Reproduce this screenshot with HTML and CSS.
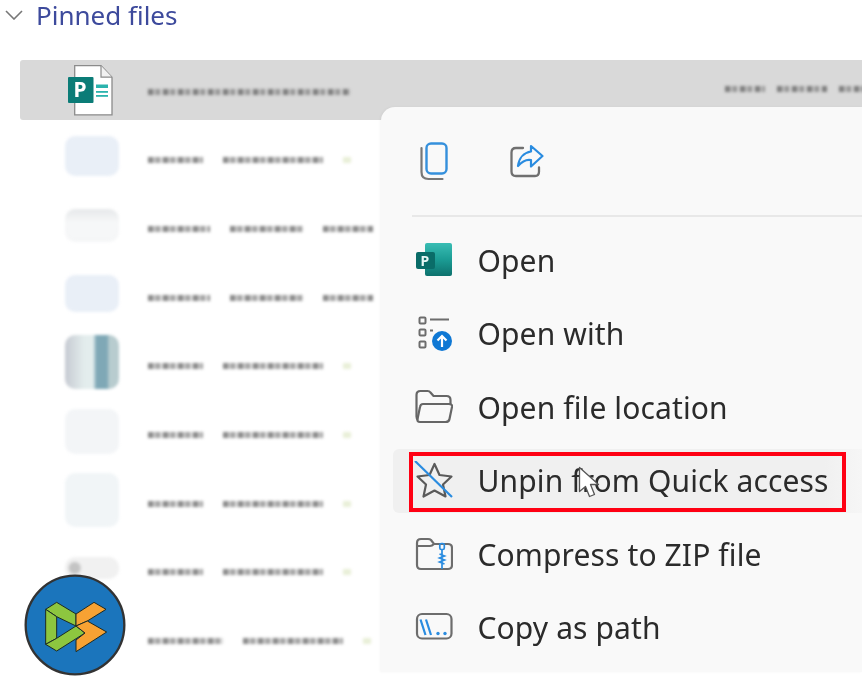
FILE: index.html
```html
<!DOCTYPE html>
<html lang="en">
<head>
<meta charset="utf-8">
<title>Pinned files</title>
<link rel="stylesheet" href="styles.css">
</head>
<body>
<main class="page">
  <header class="section-head">
    <svg class="chevron" viewBox="0 0 18 10" width="18" height="10"><path d="M1 1l8 8 8-8" fill="none" stroke="#777" stroke-width="1.6"/></svg>
    <h2 class="section-title">Pinned files</h2>
  </header>

  <section class="file-list">
    <div class="row row-selected">
      <svg class="doc-icon" viewBox="65 62 54 56" width="54" height="56">
        <path d="M74.7 65.7H101l11 11.5v37.6H74.7z" fill="#fff" stroke="#8b8b8b" stroke-width="1.3"/>
        <path d="M101 65.7v11.5h11" fill="#f1f1f1" stroke="#8b8b8b" stroke-width="1.2"/>
        <rect x="68" y="77" width="25.5" height="26" rx="1" fill="#0b7c77"/>
        <text x="73.5" y="97" class="doc-p">P</text>
        <rect x="96" y="84.500" width="12" height="3.500" fill="#2cb3ad"/>
        <rect x="96" y="91" width="12" height="1.800" fill="#2cb3ad"/>
        <rect x="96" y="95" width="12" height="1.800" fill="#2cb3ad"/>
      </svg>
      <div class="smears"><span class="seg w200"></span></div>
      <div class="smears far"><span class="seg w40"></span><span class="seg w50"></span><span class="seg w50"></span></div>
    </div>
    <div class="row"><div class="thumb t1"></div><div class="smears"><span class="seg w55"></span><span class="seg w100"></span><span class="seg tint"></span></div></div>
    <div class="row"><div class="thumb t2"></div><div class="smears"><span class="seg w62"></span><span class="seg w73"></span><span class="seg w50"></span></div></div>
    <div class="row"><div class="thumb t1 t3"></div><div class="smears"><span class="seg w62"></span><span class="seg w73"></span><span class="seg w50"></span></div></div>
    <div class="row"><div class="thumb t4"></div><div class="smears"><span class="seg w55"></span><span class="seg w100"></span><span class="seg tint"></span></div></div>
    <div class="row"><div class="thumb t5"></div><div class="smears"><span class="seg w55"></span><span class="seg w100"></span><span class="seg tint"></span></div></div>
    <div class="row"><div class="thumb t6"></div><div class="smears"><span class="seg w55"></span><span class="seg w100"></span><span class="seg tint"></span></div></div>
    <div class="row"><div class="thumb t7"></div><div class="smears"><span class="seg w55"></span><span class="seg w100"></span><span class="seg tint"></span></div></div>
    <div class="row"><div class="thumb t8"></div><div class="smears"><span class="seg w75"></span><span class="seg w100"></span><span class="seg tint"></span></div></div>
  </section>

  <nav class="menu">
    <div class="toolbar">
      <svg class="icon" viewBox="415 141 40 40" width="40" height="40">
        <path d="M421.500 148v24q0 7 7 7h14" fill="none" stroke="#777" stroke-width="2.200" stroke-linecap="round"/>
        <rect x="426.500" y="143.500" width="20" height="30" rx="4.500" fill="none" stroke="#3590dc" stroke-width="2.400"/>
      </svg>
      <svg class="icon" viewBox="505 141 40 40" width="40" height="40">
        <path d="M523 148h-7q-4.500 0-4.500 4.500v19q0 4.500 4.500 4.500h19q4 0 4-4.500v-4" fill="none" stroke="#707070" stroke-width="2.300" stroke-linecap="round"/>
        <path d="M518 166c1-8 6-13.500 13-14.500v-5.500l11.500 10-11.500 10.500v-6.500c-5-1-9.500 2-13 6z" fill="none" stroke="#2a8ce0" stroke-width="2.200" stroke-linejoin="round"/>
      </svg>
    </div>
    <div class="menu-sep"></div>
    <ul class="items">
      <li class="item">
        <svg class="icon" viewBox="0 0 40 40" width="40" height="40">
          <defs><linearGradient id="pj" x1="0" y1="0" x2="0" y2="1"><stop offset="0" stop-color="#39bdb4"/><stop offset=".5" stop-color="#1b9c94"/><stop offset="1" stop-color="#0d716d"/></linearGradient></defs>
          <rect x="12" y="2" width="27" height="33" rx="2" fill="url(#pj)"/>
          <rect x="3" y="11" width="19" height="17" rx="2" fill="#0a6c68"/>
          <text x="7.500" y="24.500" class="tile-p">P</text>
        </svg>
        <span class="label">Open</span>
      </li>
      <li class="item">
        <svg class="icon" viewBox="0 0 40 40" width="40" height="40">
          <g fill="none" stroke="#6d6d6d" stroke-width="2"><rect x="6.500" y="3.500" width="6" height="6" rx="1"/><rect x="6.500" y="15.500" width="6" height="6" rx="1"/><rect x="6.500" y="27.500" width="6" height="6" rx="1"/><path d="M17 5.500h19M17 16.500h3"/></g>
          <circle cx="29" cy="27" r="10" fill="#0f78d4"/>
          <path d="M29 33v-11M24.500 26.500l4.500-4.500 4.500 4.500" fill="none" stroke="#fff" stroke-width="2.200"/>
        </svg>
        <span class="label">Open with</span>
      </li>
      <li class="item">
        <svg class="icon" viewBox="0 0 40 40" width="40" height="40">
          <path d="M5 32c-1.500-1-1.500-2-1.500-3.500V7q0-4 4-4h7q2 0 3 1.500l3 3.500h13q4 0 4 4v4" fill="none" stroke="#666" stroke-width="2.200"/>
          <path d="M10 16h26q3.500 0 3 3l-2.500 12q-.5 3-4 3H7q-3 0-2.500-3L7 19q.5-3 3-3z" fill="none" stroke="#666" stroke-width="2.200"/>
        </svg>
        <span class="label">Open file location</span>
      </li>
      <li class="item item-active">
        <svg class="icon" viewBox="0 0 40 40" width="40" height="40">
          <path d="M21.500 3l5 11 12 1.500-8.500 8 2.500 12-11-6-11 6 2.500-12-8.500-8 12-1.500z" fill="none" stroke="#5a5a5a" stroke-width="2.200" stroke-linejoin="round"/>
          <path d="M2 0l37 36" stroke="#2a8ce0" stroke-width="2.200"/>
        </svg>
        <span class="label">Unpin from Quick access</span>
        <div class="callout"></div>
        <svg class="cursor" viewBox="0 0 22 33" width="22" height="33"><path d="M1.500 1.500v24l6-5 4 10 5-2-4-10h8z" fill="#fff" stroke="#555" stroke-width="1.300" stroke-linejoin="round"/></svg>
      </li>
      <li class="item">
        <svg class="icon" viewBox="0 0 40 40" width="40" height="40">
          <path d="M4 8q0-4 4-4h7q2 0 3 1l3 4h14q4 0 4 4v17q0 4-4 4H8q-4 0-4-4zM4 11h13q2 0 4-2" fill="none" stroke="#6d6d6d" stroke-width="2.200"/>
          <path d="M29 14v20M26.500 19l5 2-5 2 5 2-5 2 5 2" fill="none" stroke="#2a8ce0" stroke-width="1.700"/>
          <rect x="26.800" y="8.500" width="4.500" height="6" rx="1.500" fill="none" stroke="#2a8ce0" stroke-width="1.700"/>
        </svg>
        <span class="label">Compress to ZIP file</span>
      </li>
      <li class="item">
        <svg class="icon" viewBox="0 0 40 40" width="40" height="40">
          <rect x="4" y="6" width="34.500" height="24.500" rx="5" fill="none" stroke="#6d6d6d" stroke-width="2.200"/>
          <path d="M7.500 11.500l5 15.500M13 11.500l5 15.500" stroke="#2a8ce0" stroke-width="2.200" fill="none"/>
          <circle cx="25" cy="25.500" r="1.700" fill="#2a8ce0"/><circle cx="32" cy="25.500" r="1.700" fill="#2a8ce0"/>
        </svg>
        <span class="label">Copy as path</span>
      </li>
    </ul>
  </nav>

  <svg class="badge" viewBox="72 102 306 306" width="102" height="102">
    <circle cx="225" cy="255" r="148" fill="#1b75bc" stroke="#333" stroke-width="7"/>
    <g stroke="#1d2a24" stroke-width="3" stroke-linejoin="round">
      <path d="M137 208l33-21 58 35v36l-58-28z" fill="#8dc63f"/>
      <path d="M137 208l33 22v65l-33 18z" fill="#8dc63f"/>
      <path d="M137 313l33-18 58-37 27 21-85 54z" fill="#8dc63f"/>
      <path d="M228 222l54-35 36 21-56 35-34 15z" fill="#f7a233"/>
      <path d="M228 258l34-15 58 33-92 59v-35l27-21z" fill="#f7a233"/>
    </g>
  </svg>
</main>
</body>
</html>
```

FILE: styles.css
```css
* { box-sizing: border-box; }
html, body { margin: 0; padding: 0; background: #fff; }

.page {
  position: relative;
  width: 862px;
  height: 697px;
  overflow: hidden;
  font-family: "Noto Sans", "Open Sans", sans-serif;
}

.section-head {
  display: flex;
  align-items: center;
  gap: 13px;
  height: 30px;
  padding-left: 5px;
  margin-bottom: 30px;
}
.chevron { flex: none; }
.section-title {
  margin: 0;
  font-size: 26px;
  font-weight: 400;
  line-height: 30px;
  color: #3d4a9c;
  filter: blur(.4px);
}

.file-list { margin-left: 20px; }
.row {
  display: flex;
  align-items: center;
  gap: 29px;
  height: 68.700px;
  padding-left: 45px;
}
.row-selected {
  height: 60px;
  margin-bottom: 3.500px;
  background: #d9d9d9;
  border-radius: 3px 0 0 3px;
}

.doc-icon { flex: none; filter: blur(.5px); }
.doc-p { font: 700 21px "Noto Sans", sans-serif; fill: #fff; }

.thumb {
  flex: none;
  width: 54px;
  border-radius: 10px;
  filter: blur(1.500px);
  margin-top: -3px;
}
.t1 { height: 40px; background: #e9eff7; }
.t2 { height: 33px; background: linear-gradient(#e6e8ea, #f6f7f8 40%, #f5f6f7); }
.t3 { height: 37px; }
.t4 { height: 54px; background: linear-gradient(90deg, #c6cad2, #e2ecec 35%, #e4eeee 52%, #7fa8b6 58%, #7fa8b6 78%, #b8cccf 82%); }
.t5 { height: 45px; background: #f3f5f7; }
.t6 { height: 54px; background: #f1f5f7; }
.t7 { height: 22px; background: radial-gradient(circle at 18% 50%, #c4c4c4 0 5px, #f1f1f1 7px); }
.t8 { height: 22px; background: transparent; }

.smears {
  display: flex;
  gap: 20px;
  flex: none;
  margin-top: 5px;
  filter: blur(1.800px);
}
.row-selected .smears { margin-top: 3px; gap: 12px; }
.row-selected .far { position: absolute; left: 725px; top: 86px; margin: 0; }
.seg {
  display: block;
  height: 6px;
  background: repeating-linear-gradient(90deg, #555 0 5px, #aaa 5px 8px, #777 8px 12px, #ccc 12px 15px);
  opacity: .7;
}
.tint { width: 8px; background: #dfe8c8; }
.w40 { width: 40px; }
.w50 { width: 50px; }
.w55 { width: 55px; }
.w62 { width: 62px; }
.w73 { width: 73px; }
.w75 { width: 75px; }
.w100 { width: 100px; }
.w200 { width: 202px; }

.menu {
  position: absolute;
  left: 381px;
  top: 107px;
  right: 0;
  height: 565px;
  background: #f9f9f9;
  border-radius: 14px 0 0 0;
  box-shadow: -1px 0 3px rgba(0, 0, 0, .04);
}
.toolbar {
  display: flex;
  align-items: center;
  gap: 50px;
  height: 108px;
  padding-left: 34px;
}
.icon { flex: none; display: block; filter: blur(.35px); }
.menu-sep {
  height: 2px;
  margin-left: 31px;
  background: #e8e8e8;
}
.items {
  list-style: none;
  margin: 0;
  padding: 12px 0 0 12px;
  display: flex;
  flex-direction: column;
  gap: 9.400px;
}
.item {
  position: relative;
  display: flex;
  align-items: center;
  gap: 24.500px;
  height: 64px;
  padding-left: 20px;
  border-radius: 6px 0 0 6px;
}
.item-active { background: linear-gradient(90deg, #f0f0f0 92%, #f6f6f6); }
.label {
  font-size: 30px;
  line-height: 40px;
  letter-spacing: .12px;
  color: #2b2b2b;
  white-space: nowrap;
  filter: blur(.35px);
}
.tile-p { font: 700 14px "Noto Sans", sans-serif; fill: #e8f6f5; }

.callout {
  position: absolute;
  left: 16px;
  top: 3px;
  width: 437px;
  height: 60px;
  border: 4px solid #ff0013;
}
.cursor {
  position: absolute;
  left: 185px;
  top: 17px;
}
.badge {
  position: absolute;
  left: 24px;
  top: 574px;
}
```
